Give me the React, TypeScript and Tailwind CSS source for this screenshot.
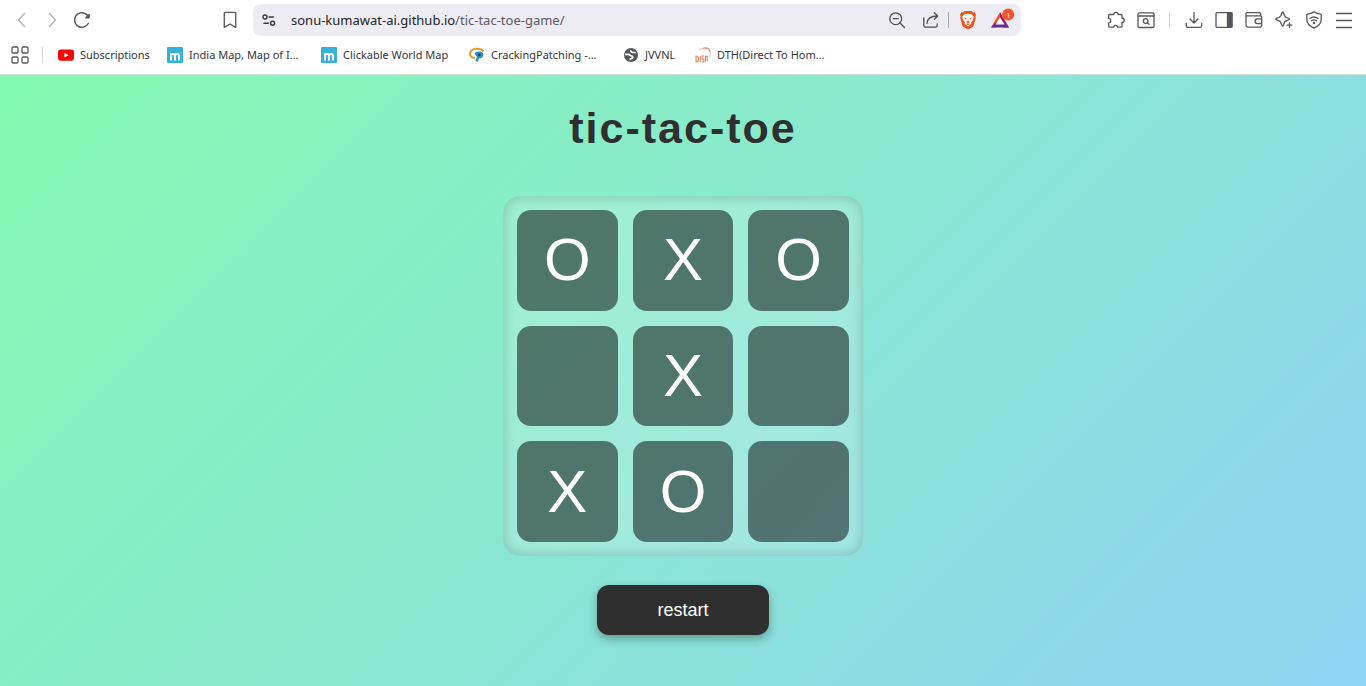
import { useState } from "react";
import type { ReactNode } from "react";

const UI_FONT = "font-['Noto_Sans','Open_Sans',sans-serif]";

function Icon({ children, size = 18 }: { children: ReactNode; size?: number }) {
  return (
    <svg
      width={size}
      height={size}
      viewBox="0 0 18 18"
      fill="none"
      stroke="currentColor"
      strokeWidth="1.3"
      strokeLinecap="round"
      strokeLinejoin="round"
      aria-hidden="true"
    >
      {children}
    </svg>
  );
}

function ToolButton({ label, children, muted }: { label: string; children: ReactNode; muted?: boolean }) {
  return (
    <button
      type="button"
      aria-label={label}
      className={
        muted
          ? "flex h-8 w-[30px] shrink-0 items-center justify-center text-[#b4b4b8]"
          : "flex h-8 w-[30px] shrink-0 items-center justify-center text-[#56575c]"
      }
    >
      {children}
    </button>
  );
}

function AddressBar() {
  return (
    <div className="flex h-8 min-w-0 flex-1 items-center rounded-lg bg-[#edebf3] pl-2">
      <button type="button" aria-label="Site settings" className="flex w-4 shrink-0 justify-center text-[#3a3a40]">
        <svg width="14" height="14" viewBox="0 0 14 14" fill="none" stroke="currentColor" strokeWidth="1.4" strokeLinecap="round" aria-hidden="true">
          <circle cx="3" cy="4" r="2" />
          <path d="M7 4h4.5M2 10.2h4.5" />
          <circle cx="10.6" cy="10.2" r="2" />
        </svg>
      </button>
      <a href="#board" className="ml-[14px] min-w-0 flex-1 truncate text-[13px] leading-5 text-[#1f1f25]">
        sonu-kumawat-ai.github.io<span className="text-[#5b5a63]">/tic-tac-toe-game/</span>
      </a>
      <button type="button" aria-label="Zoom" className="flex w-[34px] shrink-0 justify-center text-[#4f4f57]">
        <Icon>
          <circle cx="7.7" cy="7.7" r="5.9" />
          <path d="M12 12l4.500 4.500M5.200 7.700h5" />
        </Icon>
      </button>
      <button type="button" aria-label="Share" className="flex w-[34px] shrink-0 justify-center text-[#4f4f57]">
        <Icon>
          <path d="M1.800 7v7.400c0 1 .8 1.800 1.800 1.800h9.800c1 0 1.800-.8 1.800-1.800v-1.600" />
          <path d="M5 12.500c.2-4.600 3.200-7.500 10.500-7.500M12.200 1.800L15.700 5l-3.300 3.300" />
        </Icon>
      </button>
      <span className="h-4 w-px shrink-0 bg-[#a9a8b3]" />
      <button type="button" aria-label="Brave Shields" className="flex w-[38px] shrink-0 justify-center">
        <svg width="18" height="20" viewBox="0 0 18 20" aria-hidden="true">
          <path d="M5.500 1h7l1.500 1.500 1.700-.2 1.300 2.200-.7 1.700.5 1.500-2.100 7.500c-.3 1-.9 1.500-1.700 2.100L9 19.500l-4-2.200c-.8-.6-1.400-1.100-1.700-2.100L1.200 7.700l.5-1.500L1 4.500l1.300-2.200 1.700.2z" fill="#f0501e" />
          <path d="M5.500 4.200L9 3.700l3.500.5 2.200 2.400-.5 2.900-2 2.800.2 1.500L9 16.500l-3.400-2.700.2-1.500-2-2.800-.5-2.900z" fill="#fff" />
          <path d="M4.800 7.500l2.700.8-.5 1.500zM13.200 7.500l-2.700.8.5 1.500zM9 8.300l.5 2.700 1.300.9L9 13.300l-1.800-1.400 1.300-.9zM7 14l2-.7 2 .7-2 1.300z" fill="#f0501e" />
        </svg>
      </button>
      <button type="button" aria-label="Brave Rewards" className="mr-1 flex w-[30px] shrink-0 justify-center">
        <svg width="26" height="24" viewBox="0 0 26 24" aria-hidden="true">
          <path d="M11 4L2 19.500h5.200L11 12z" fill="#ff4a24" />
          <path d="M11 4L20 19.500h-5.200L11 12z" fill="#9e1f63" />
          <path d="M2 19.500h18l-3-4.200H5.500z" fill="#662d91" />
          <path d="M11 9.300L6.500 16.400h9z" fill="#fff" />
          <circle cx="19.200" cy="6.500" r="6" fill="#fb542b" />
          <text x="19.200" y="9.500" textAnchor="middle" fontSize="8" fill="#fff" fontFamily="Open Sans, sans-serif">1</text>
        </svg>
      </button>
    </div>
  );
}

function Toolbar() {
  return (
    <div className="flex h-10 items-center">
      <div className="flex w-[245px] shrink-0 justify-between pl-[7px]">
        <div className="flex">
          <ToolButton label="Back" muted>
            <Icon><path d="M11.500 2.500L5.500 9l6 6.500" /></Icon>
          </ToolButton>
          <ToolButton label="Forward" muted>
            <Icon><path d="M6.500 2.500l6 6.500-6 6.500" /></Icon>
          </ToolButton>
          <ToolButton label="Reload">
            <Icon>
              <path d="M15.300 12.500A7.300 7.300 0 1 1 15.500 6" strokeWidth="1.500" />
              <path d="M12.800 6.800h3.300V3.500z" fill="currentColor" />
            </Icon>
          </ToolButton>
        </div>
        <ToolButton label="Bookmark this page">
          <Icon><path d="M4 1.400h10c.4 0 .7.3.7.7v14.300L9 13l-5.700 3.400V2.100c0-.4.3-.7.7-.7z" /></Icon>
        </ToolButton>
      </div>
      <div className="flex min-w-0 flex-1 pl-2">
        <AddressBar />
      </div>
      <div className="flex w-[345px] shrink-0 items-center justify-end pr-[7px]">
        <ToolButton label="Extensions">
          <Icon>
            <path d="M2.500 3.500h4.200a2.200 2.200 0 1 1 4.400 0H14c.6 0 1 .4 1 1V7a2.200 2.200 0 1 1 0 4.400v3.800c0 .6-.4 1-1 1h-3.500a1.900 1.900 0 0 0-3.800 0H2.700c-.6 0-1-.4-1-1v-3.400a2.100 2.100 0 0 0 0-4.200V4.400c0-.5.300-.9.800-.9z" />
          </Icon>
        </ToolButton>
        <ToolButton label="Search tabs">
          <Icon>
            <rect x="1" y="1.800" width="16" height="14.700" rx="1.300" />
            <path d="M1 5h16" />
            <circle cx="8.700" cy="10" r="2.300" />
            <path d="M10.500 11.800l1.500 1.500" />
          </Icon>
        </ToolButton>
        <span className="mr-[9px] ml-2 h-4 w-px shrink-0 bg-[#d6d6da]" />
        <ToolButton label="Downloads">
          <Icon>
            <path d="M9 1.500v10M5 8l4 4 4-4M1.300 12.500v2.200c0 .9.700 1.600 1.600 1.600h12.200c.9 0 1.600-.7 1.600-1.600v-2.200" />
          </Icon>
        </ToolButton>
        <ToolButton label="Side panel">
          <Icon>
            <rect x="1" y="1.700" width="16" height="14.600" rx="1" />
            <path d="M12.500 2h4.300v14h-4.300z" fill="currentColor" />
          </Icon>
        </ToolButton>
        <ToolButton label="Wallet">
          <Icon>
            <path d="M1 4.300v10c0 1 .8 1.800 1.800 1.800h12.400c1 0 1.500-.7 1.500-1.600V6.300c0-.9-.7-1.500-1.500-1.500H1.800C1.300 4.800 1 4.500 1 4V3c0-.8.600-1.300 1.300-1.300h12c.8 0 1.400.6 1.400 1.400v1.500M16.700 7.800h-4.200a2.300 2.300 0 0 0 0 4.800h4.200" />
          </Icon>
        </ToolButton>
        <ToolButton label="Leo AI">
          <Icon>
            <path d="M7.700 1c.5 0 .8.900 1.700 3.500.4 1 .8 1.400 1.800 1.800 2.500.8 3.500 1.200 3.500 1.800s-1 .9-3.500 1.800c-1 .4-1.400.8-1.800 1.800-.9 2.500-1.200 3.500-1.700 3.500s-.9-1-1.800-3.500c-.4-1-.8-1.400-1.800-1.800C1.600 9 .600 8.700.600 8.100s1-1 3.500-1.800c1-.4 1.400-.8 1.800-1.800C6.800 1.900 7.200 1 7.700 1zM14.500 11.800v4.800M12.100 14.200h4.800" />
          </Icon>
        </ToolButton>
        <ToolButton label="VPN">
          <Icon>
            <path d="M9 .9c2 1.400 4.300 2 6.700 2.200.3 0 .5.300.5.600v5c0 3.700-3.700 6.700-7.200 8.400-3.500-1.700-7.200-4.700-7.200-8.400v-5c0-.3.200-.6.500-.6C4.700 2.900 7 2.300 9 .9z" />
            <path d="M5 7.600c2.400-1.900 5.600-1.900 8 0M6.500 9.800c1.500-1.200 3.500-1.200 5 0" />
            <circle cx="9" cy="12" r=".6" fill="currentColor" />
          </Icon>
        </ToolButton>
        <ToolButton label="Menu">
          <Icon><path d="M1 2.500h16M1 9.500h16M1 16.500h16" strokeLinecap="butt" /></Icon>
        </ToolButton>
      </div>
    </div>
  );
}

function MapsIcon() {
  return (
    <svg width="16" height="16" viewBox="0 0 16 16" aria-hidden="true">
      <rect width="16" height="16" rx="1" fill="#35b1dc" />
      <path d="M4 13.500V6.500M4 8.500c0-2.100 4-2.100 4 0v5M8 8.500c0-2.100 4-2.100 4 0v5" fill="none" stroke="#fff" strokeWidth="2" />
    </svg>
  );
}

function YoutubeIcon() {
  return (
    <svg width="16" height="16" viewBox="0 0 16 16" aria-hidden="true">
      <rect y="2.500" width="16" height="11.300" rx="3" fill="#f00" />
      <path d="M6.400 5.700v4.900l4.200-2.450z" fill="#fff" />
    </svg>
  );
}

function CrackingIcon() {
  return (
    <svg width="16" height="16" viewBox="0 0 16 16" fill="none" aria-hidden="true">
      <path d="M14.500 4.500C12 .8 3 .8 1.300 5.500.3 8.500 2.500 11 6 11.300" stroke="#dca02c" strokeWidth="2" />
      <path d="M5.500 6.500C8 3.500 14.500 4 14.500 7.700c0 2.700-2.500 3.800-4.500 3.600l-1 3.700-2.500-1 1.300-4.300z" fill="#2d8fc4" />
      <path d="M9 7.200c1.500-.7 3-.3 2.800.8-.2 1-1.600 1.400-2.800 1z" fill="#17475f" />
    </svg>
  );
}

function GlobeIcon() {
  return (
    <svg width="16" height="16" viewBox="0 0 16 16" aria-hidden="true">
      <circle cx="8" cy="8" r="7" fill="#54575c" />
      <path d="M2.200 7.300h3.300c1.500 0 1.500 1.700 3 1.700 1.300 0 1.700 1.200.7 2.200-.6.600-1.700 1-2.700 1.200M12.800 5.500H10c-1.800 0-1.700-1.700-3-1.900" fill="none" stroke="#fff" strokeWidth="1.700" />
    </svg>
  );
}

function DishIcon() {
  return (
    <svg width="16" height="16" viewBox="0 0 16 16" fill="none" stroke="#e9825d" aria-hidden="true">
      <path d="M4 3.500C8-.5 15-.3 15.300 6c.1 2-.4 3.500-1.300 4.500" strokeWidth=".6" />
      <path d="M8 1.500c3-1.200 6-.3 7 3" strokeWidth="1.200" />
      <path d="M1 9v6c2.200 0 2.500-1 2.500-3S3 9 1 9zM5.200 9v6M9 9H7v3h1.800v3H6.800M10.500 15V9.300h1.800V14" strokeWidth="1.100" />
    </svg>
  );
}

const bookmarks: { label: string; icon: ReactNode; width: string }[] = [
  { label: "Subscriptions", icon: <YoutubeIcon />, width: "w-[93px]" },
  { label: "India Map, Map of I...", icon: <MapsIcon />, width: "w-[138px]" },
  { label: "Clickable World Map", icon: <MapsIcon />, width: "w-[132px]" },
  { label: "CrackingPatching -...", icon: <CrackingIcon />, width: "w-[138px]" },
  { label: "JVVNL", icon: <GlobeIcon />, width: "w-14" },
  { label: "DTH(Direct To Hom...", icon: <DishIcon />, width: "w-[138px]" },
];

function BookmarksBar() {
  return (
    <nav aria-label="Bookmarks" className="flex h-[34px] items-center pb-1 pl-[5px]">
      <ToolButton label="All bookmarks">
        <Icon>
          <rect x="1" y="1" width="6" height="6" rx="1.300" />
          <rect x="11" y="1" width="6" height="6" rx="1.300" />
          <rect x="1" y="11" width="6" height="6" rx="1.300" />
          <rect x="11" y="11" width="6" height="6" rx="1.300" />
        </Icon>
      </ToolButton>
      <span className="mr-[15px] ml-[7px] h-4 w-px shrink-0 bg-[#d6d6da]" />
      <div className="flex items-center gap-4">
        {bookmarks.map((b) => (
          <a
            key={b.label}
            href="#board"
            className={`${b.width} flex shrink-0 items-center gap-[6px] text-[11px] leading-4 whitespace-nowrap text-[#35353a]`}
          >
            <span className="shrink-0">{b.icon}</span>
            {b.label}
          </a>
        ))}
      </div>
    </nav>
  );
}

const opening = ["O", "X", "O", "", "X", "", "X", "O", ""];

export default function App() {
  const [cells, setCells] = useState<string[]>(opening);
  const play = (i: number) =>
    setCells((prev) => {
      if (prev[i]) return prev;
      const filled = prev.filter(Boolean).length;
      return prev.map((c, n) => (n === i ? (filled % 2 === 0 ? "O" : "X") : c));
    });

  return (
    <div className="flex min-h-screen flex-col bg-white">
      <header className={`${UI_FONT} border-b border-[#cfe3dc]`}>
        <Toolbar />
        <BookmarksBar />
      </header>
      <main className="flex flex-1 flex-col items-center bg-[linear-gradient(135deg,#84fab0,#8fd3f4)] px-4 pt-[29px] pb-8 font-['Liberation_Sans',Arial,sans-serif]">
        <h1 className="text-[43px] leading-[48px] font-bold tracking-[2px] text-[#2f2f2f]">tic-tac-toe</h1>
        <div
          id="board"
          className="mt-11 grid aspect-square w-full max-w-[360px] grid-cols-3 grid-rows-3 gap-[15px] rounded-[18px] bg-white/20 p-[14px] shadow-[inset_0_0_14px_rgba(0,0,0,0.2)]"
        >
          {cells.map((mark, i) => (
            <button
              key={i}
              type="button"
              aria-label={`Cell ${i + 1} ${mark}`}
              onClick={() => play(i)}
              className="flex items-center justify-center rounded-[14px] bg-black/50 text-[60px] leading-none text-white"
            >
              {mark}
            </button>
          ))}
        </div>
        <button
          type="button"
          onClick={() => setCells(Array(9).fill(""))}
          className="mt-[29px] h-[50px] w-[172px] rounded-xl bg-[#2f2f2f] text-lg text-white shadow-[0_4px_10px_rgba(0,0,0,0.3)]"
        >
          restart
        </button>
      </main>
    </div>
  );
}
